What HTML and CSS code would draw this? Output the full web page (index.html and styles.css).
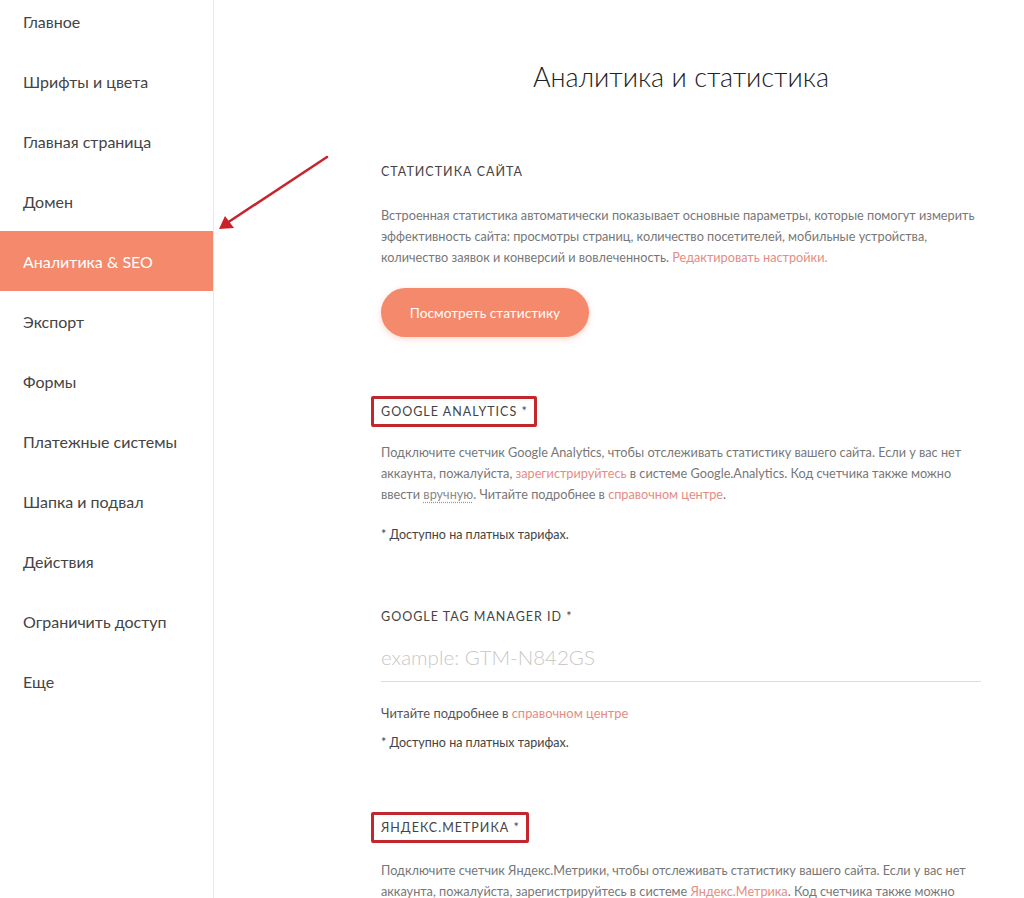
FILE: index.html
```html
<!DOCTYPE html>
<html lang="ru">
<head>
    <meta charset="UTF-8">
    <meta name="viewport" content="width=device-width, initial-scale=1.0">
    <title>Аналитика и статистика</title>
    <link rel="stylesheet" href="styles.css">
</head>
<body>
    <div class="layout">
        <aside class="sidebar">
            <ul class="menu">
                <li class="menu-item">Главное</li>
                <li class="menu-item">Шрифты и цвета</li>
                <li class="menu-item">Главная страница</li>
                <li class="menu-item">Домен</li>
                <li class="menu-item active">Аналитика &amp; SEO</li>
                <li class="menu-item">Экспорт</li>
                <li class="menu-item">Формы</li>
                <li class="menu-item">Платежные системы</li>
                <li class="menu-item">Шапка и подвал</li>
                <li class="menu-item">Действия</li>
                <li class="menu-item">Ограничить доступ</li>
                <li class="menu-item">Еще</li>
            </ul>
        </aside>

        <main class="content">
            <h1 class="page-title">Аналитика и статистика</h1>

            <section class="section stats">
                <h2 class="section-title">Статистика сайта</h2>
                <p class="text">Встроенная статистика автоматически показывает основные параметры, которые помогут измерить эффективность сайта: просмотры страниц, количество посетителей, мобильные устройства, количество заявок и конверсий и вовлеченность. <a class="link" href="#">Редактировать настройки.</a></p>
                <button class="btn" type="button">Посмотреть статистику</button>
            </section>

            <section class="section ga">
                <h2 class="section-title marked">Google Analytics *</h2>
                <p class="text">Подключите счетчик Google Analytics, чтобы отслеживать статистику вашего сайта. Если у вас нет аккаунта, пожалуйста, <a class="link" href="#">зарегистрируйтесь</a> в системе Google.Analytics. Код счетчика также можно ввести <a class="dotted" href="#">вручную</a>. Читайте подробнее в <a class="link" href="#">справочном центре</a>.</p>
                <p class="note">* Доступно на платных тарифах.</p>
            </section>

            <section class="section gtm">
                <h2 class="section-title">Google Tag Manager ID *</h2>
                <input class="field" type="text" placeholder="example: GTM-N842GS">
                <p class="hint">Читайте подробнее в <a class="link" href="#">справочном центре</a></p>
                <p class="note note-tight">* Доступно на платных тарифах.</p>
            </section>

            <section class="section ym">
                <h2 class="section-title marked">Яндекс.Метрика *</h2>
                <p class="text">Подключите счетчик Яндекс.Метрики, чтобы отслеживать статистику вашего сайта. Если у вас нет аккаунта, пожалуйста, зарегистрируйтесь в системе <a class="link" href="#">Яндекс.Метрика</a>. Код счетчика также можно ввести <a class="dotted" href="#">вручную</a>. Читайте подробнее в <a class="link" href="#">справочном центре</a>.</p>
            </section>
        </main>
    </div>

    <!-- annotation arrow over the page -->
    <svg class="arrow" width="130" height="90" viewBox="0 0 130 90">
        <line x1="114" y1="7" x2="14" y2="73" stroke="#c9222b" stroke-width="2.5" stroke-linecap="round"/>
        <polygon points="6,79 12,66 21,78" fill="#c9222b"/>
    </svg>
</body>
</html>
```

FILE: styles.css
```css
* {
    box-sizing: border-box;
}
html, body {
    margin: 0;
    padding: 0;
    height: 100%;
    overflow: hidden;
}
body {
    font-family: Lato, "Noto Sans", sans-serif;
    background: #fff;
    color: #333;
    position: relative;
}
.layout {
    display: flex;
    height: 898px;
}
.sidebar {
    width: 214px;
    flex-shrink: 0;
    border-right: 1px solid #e8e8e8;
}
.menu {
    list-style: none;
    margin: -9px 0 0 0;
    padding: 0;
}
.menu-item {
    height: 60px;
    line-height: 62px;
    padding-left: 23px;
    font-size: 16px;
    color: #444;
}
.menu-item.active {
    background-color: #f5896c;
    color: #fff;
}

.content {
    flex: 1;
    padding-left: 167px;
}
.content > * {
    width: 600px;
}
.page-title {
    margin: 59px 0 0 0;
    font-size: 27px;
    line-height: 36px;
    font-weight: 300;
    text-align: center;
    color: #222;
}
.section-title {
    margin: 0;
    font-size: 12.5px;
    line-height: 20px;
    font-weight: 400;
    text-transform: uppercase;
    letter-spacing: 1px;
    color: #444;
}
.section-title.marked {
    display: inline-block;
    margin-left: -10px;
    padding: 4px 6px 4px 7px;
    line-height: 17px;
    border: 3px solid #c1272d;
    border-radius: 2px;
}
.stats {
    margin-top: 67px;
}
.text {
    margin: 23px 0 0 0;
    font-size: 12.7px;
    line-height: 21px;
    color: #777;
}
.ga .text {
    margin-top: 15px;
}
.ym .text {
    margin-top: 17px;
}
.link {
    color: #e48d82;
    text-decoration: none;
}
.dotted {
    color: #888;
    text-decoration: underline dotted #999;
    text-underline-offset: 3px;
}
.btn {
    margin-top: 20px;
    width: 208px;
    height: 49px;
    border: none;
    border-radius: 25px;
    background-color: #f5896c;
    color: #fff;
    font-family: inherit;
    font-size: 13.7px;
    cursor: pointer;
    box-shadow: 0 2px 6px rgba(245, 137, 108, 0.35);
}
.ga {
    margin-top: 59px;
}
.note {
    margin: 20px 0 0 0;
    font-size: 12.5px;
    line-height: 20px;
    color: #444;
}
.note-tight {
    margin-top: 10px;
}
.gtm {
    margin-top: 62px;
}
.field {
    display: block;
    width: 600px;
    margin-top: 15px;
    padding: 0 0 9px 0;
    border: none;
    border-bottom: 1px solid #ddd;
    font-family: inherit;
    font-size: 20.5px;
    font-weight: 300;
    line-height: 30px;
    height: 40px;
    outline: none;
}
.field::placeholder {
    color: #c8c8c8;
}
.hint {
    margin: 21px 0 0 0;
    font-size: 12.9px;
    line-height: 20px;
    color: #555;
}
.ym {
    margin-top: 59px;
}

.arrow {
    position: absolute;
    left: 213px;
    top: 150px;
}
```
